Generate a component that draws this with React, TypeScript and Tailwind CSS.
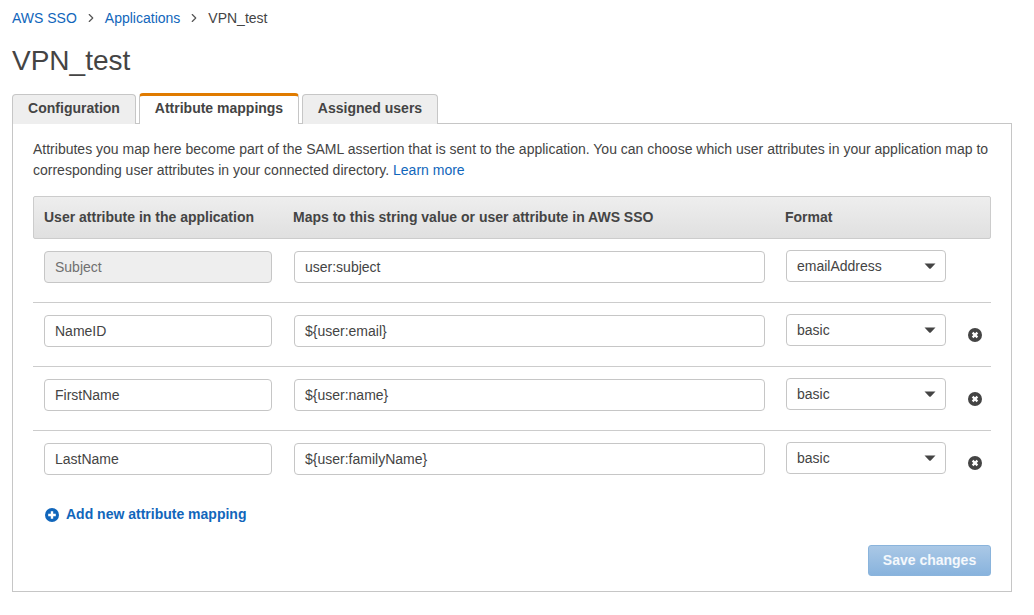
import React from 'react';
import { ChevronRight } from 'lucide-react';

const rows = [
  { name: 'Subject', value: 'user:subject', format: 'emailAddress', locked: true },
  { name: 'NameID', value: '${user:email}', format: 'basic' },
  { name: 'FirstName', value: '${user:name}', format: 'basic' },
  { name: 'LastName', value: '${user:familyName}', format: 'basic' },
];

function RemoveIcon() {
  return (
    <svg width="14" height="14" viewBox="0 0 14 14">
      <circle cx="7" cy="7" r="7" fill="#444" />
      <path d="M4.6 4.6l4.8 4.8M9.4 4.6l-4.8 4.8" stroke="#fff" strokeWidth="2.2" />
    </svg>
  );
}

function AddIcon() {
  return (
    <svg width="14" height="14" viewBox="0 0 14 14">
      <circle cx="7" cy="7" r="7" fill="#1166bb" />
      <path d="M3.2 7h7.6M7 3.2v7.6" stroke="#fff" strokeWidth="2.4" />
    </svg>
  );
}

function Caret() {
  return (
    <svg width="12" height="6" viewBox="0 0 12 6">
      <path d="M0.5 0.5h11L7 5.2a1.4 1.4 0 0 1-2 0z" fill="#444" />
    </svg>
  );
}

function MappingRow({ name, value, format, locked, last }: { name: string; value: string; format: string; locked?: boolean; last?: boolean }) {
  return (
    <div className={`flex items-start h-[64px] pt-[12px] ${last ? '' : 'border-b border-[#cccccc]'}`}>
      <div className="w-[261px] pl-[11px] shrink-0">
        <div className={`w-[228px] h-[32px] flex items-center px-[10px] border border-[#c6c6c6] rounded-[4px] ${locked ? 'bg-[#eeeeee] text-[#707070]' : 'bg-white text-[#444444]'}`}>
          {name}
        </div>
      </div>
      <div className="w-[471px] h-[32px] shrink-0 flex items-center px-[10px] bg-white text-[#444444] border border-[#c6c6c6] rounded-[4px]">
        {value}
      </div>
      <div className="ml-[21px] w-[160px] h-[32px] -mt-px shrink-0 flex items-center justify-between pl-[10px] pr-[9px] bg-white text-[#444444] border border-[#c6c6c6] rounded-[4px]">
        <span>{format}</span>
        <Caret />
      </div>
      {!locked && (
        <div className="ml-[22px] mt-[13px]">
          <RemoveIcon />
        </div>
      )}
    </div>
  );
}

export default function App() {
  return (
    <div className="w-[1034px] h-[615px] overflow-hidden bg-white text-[14px] leading-[21px] text-[#444444] font-['Liberation_Sans',Arial,sans-serif] px-[12px] pt-[8px]">
      <nav className="flex items-center h-[20px]">
        <a className="text-[#1166bb]">AWS SSO</a>
        <ChevronRight className="w-[14px] h-[14px] mx-[7px] text-[#555555]" />
        <a className="text-[#1166bb]">Applications</a>
        <ChevronRight className="w-[14px] h-[14px] mx-[7px] text-[#555555]" />
        <span>VPN_test</span>
      </nav>

      <h1 className="text-[28px] leading-[34px] mt-[16px] font-normal">VPN_test</h1>

      <div className="flex gap-[3px] mt-[15px] h-[31px] items-end relative z-10 -mb-px">
        <div className="w-[124px] h-[30px] flex items-center justify-center pb-[2px] font-bold text-[#444444] bg-[#eeeeee] border border-b-0 border-[#c6c6c6] rounded-t-[4px]">Configuration</div>
        <div className="w-[160px] h-[31px] flex items-center justify-center pb-[3px] font-bold text-[#444444] bg-white border-x border-[#c6c6c6] border-t-[3px] border-t-[#e07b00] rounded-t-[4px]">Attribute mappings</div>
        <div className="w-[136px] h-[30px] flex items-center justify-center pb-[2px] font-bold text-[#444444] bg-[#eeeeee] border border-b-0 border-[#c6c6c6] rounded-t-[4px]">Assigned users</div>
      </div>

      <section className="w-[1000px] h-[469px] border border-[#c6c6c6] px-[20px] pt-[15px]">
        <p className="leading-[21px]">
          Attributes you map here become part of the SAML assertion that is sent to the application. You can choose which user attributes in your application map to corresponding user attributes in your connected directory. <a className="text-[#1166bb]">Learn more</a>
        </p>

        <div className="mt-[15px] w-[958px] h-[43px] flex items-center font-bold bg-gradient-to-b from-[#eeeeee] to-[#e0e0e0] border border-[#cccccc] rounded-[2px]">
          <div className="w-[259px] pl-[10px] shrink-0">User attribute in the application</div>
          <div className="w-[492px] shrink-0">Maps to this string value or user attribute in AWS SSO</div>
          <div>Format</div>
        </div>

        <div className="w-[958px]">
          {rows.map((row, i) => (
            <MappingRow key={row.name} {...row} last={i === rows.length - 1} />
          ))}
        </div>

        <a className="flex items-center gap-[7px] ml-[12px] mt-[9px] h-[21px] font-bold text-[#1166bb]">
          <AddIcon />
          Add new attribute mapping
        </a>

        <div className="w-[958px] flex justify-end mt-[20px]">
          <button className="w-[123px] h-[31px] font-bold text-white/90 bg-gradient-to-b from-[#aac8e6] to-[#88b3dd] border border-[#8ab4dc] rounded-[3px]">Save changes</button>
        </div>
      </section>
    </div>
  );
}
